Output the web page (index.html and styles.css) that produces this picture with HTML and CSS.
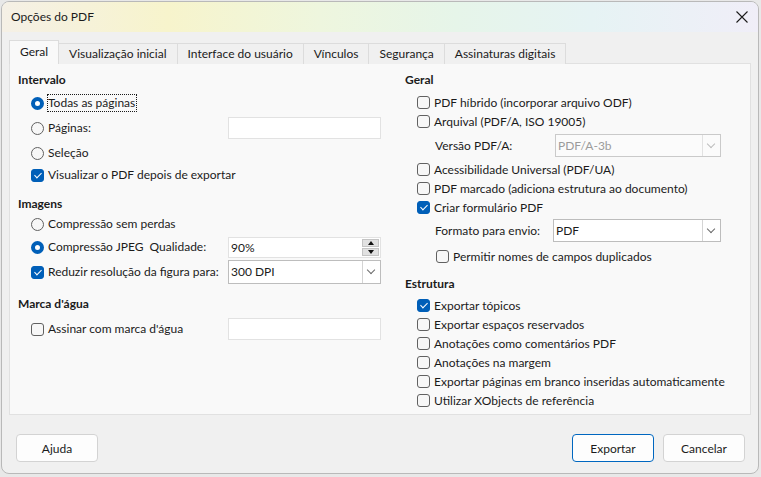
FILE: index.html
```html
<!DOCTYPE html>
<html lang="pt-BR">
<head>
  <meta charset="UTF-8">
  <meta name="viewport" content="width=device-width, initial-scale=1.0">
  <title>Opções do PDF</title>
  <link rel="stylesheet" href="styles.css">
</head>
<body>
  <div class="window">
    <div class="titlebar">
      <span class="title">Opções do PDF</span>
      <svg class="close" width="12" height="12" viewBox="0 0 12 12">
        <path d="M0.5 0.5 L11.5 11.5 M11.5 0.5 L0.5 11.5" stroke="#1b1b1b" stroke-width="1.1" fill="none"/>
      </svg>
    </div>

    <div class="tabs">
      <div class="tab active">Geral</div>
      <div class="tab">Visualização inicial</div>
      <div class="tab">Interface do usuário</div>
      <div class="tab">Vínculos</div>
      <div class="tab">Segurança</div>
      <div class="tab">Assinaturas digitais</div>
    </div>

    <div class="panel">
      <div class="col left">
        <div class="heading">Intervalo</div>
        <div class="row mt4"><span class="radio on"></span><span class="label focus">Todas as páginas</span></div>
        <div class="row field"><span class="radio"></span><span class="label">Páginas:</span><span class="input control"></span></div>
        <div class="row"><span class="radio"></span><span class="label">Seleção</span></div>
        <div class="row mt0"><span class="box on"></span><span class="label">Visualizar o PDF depois de exportar</span></div>

        <div class="heading mt10">Imagens</div>
        <div class="row mt1"><span class="radio"></span><span class="label">Compressão sem perdas</span></div>
        <div class="row field mt1">
          <span class="radio on"></span><span class="label">Compressão JPEG&nbsp; Qualidade:</span>
          <span class="spin control">
            <span class="spin-value">90%</span>
            <span class="spin-buttons">
              <span class="spin-btn"><span class="tri up"></span></span>
              <span class="spin-btn"><span class="tri down"></span></span>
            </span>
          </span>
        </div>
        <div class="row field">
          <span class="box on"></span><span class="label">Reduzir resolução da figura para:</span>
          <span class="select control tall"><span class="select-value">300 DPI</span><span class="arrow"></span></span>
        </div>

        <div class="heading mt13">Marca d'água</div>
        <div class="row field mt6"><span class="box"></span><span class="label">Assinar com marca d'água</span><span class="input control"></span></div>
      </div>

      <div class="col right">
        <div class="heading">Geral</div>
        <div class="item mt5"><span class="box"></span><span class="label">PDF híbrido (incorporar arquivo ODF)</span></div>
        <div class="item"><span class="box"></span><span class="label">Arquival (PDF/A, ISO 19005)</span></div>
        <div class="sub-field mt3">
          <span class="field-label">Versão PDF/A:</span>
          <span class="select disabled"><span class="select-value">PDF/A-3b</span><span class="arrow"></span></span>
        </div>
        <div class="item mt3"><span class="box"></span><span class="label">Acessibilidade Universal (PDF/UA)</span></div>
        <div class="item"><span class="box"></span><span class="label">PDF marcado (adiciona estrutura ao documento)</span></div>
        <div class="item"><span class="box on"></span><span class="label">Criar formulário PDF</span></div>
        <div class="sub-field mt2">
          <span class="field-label">Formato para envio:</span>
          <span class="select wide"><span class="select-value">PDF</span><span class="arrow"></span></span>
        </div>
        <div class="item nested mt5"><span class="box"></span><span class="label">Permitir nomes de campos duplicados</span></div>

        <div class="heading mt10">Estrutura</div>
        <div class="item mt4"><span class="box on"></span><span class="label">Exportar tópicos</span></div>
        <div class="item"><span class="box"></span><span class="label">Exportar espaços reservados</span></div>
        <div class="item"><span class="box"></span><span class="label">Anotações como comentários PDF</span></div>
        <div class="item"><span class="box"></span><span class="label">Anotações na margem</span></div>
        <div class="item"><span class="box"></span><span class="label">Exportar páginas em branco inseridas automaticamente</span></div>
        <div class="item"><span class="box"></span><span class="label">Utilizar XObjects de referência</span></div>
      </div>
    </div>

    <div class="footer">
      <button class="button help">Ajuda</button>
      <button class="button primary">Exportar</button>
      <button class="button">Cancelar</button>
    </div>
  </div>
</body>
</html>
```

FILE: styles.css
```css
* {
  box-sizing: border-box;
}
body {
  margin: 0;
  background: #e8e8e8;
  font-family: Lato, "Noto Sans", sans-serif;
  font-size: 12px;
  color: #1b1b1b;
}
.window {
  margin: 1px 0 0 1px;
  width: 758px;
  height: 473px;
  border: 1px solid #b9b9b9;
  border-radius: 8px;
  background: #f0f0f0;
  overflow: hidden;
}
.titlebar {
  height: 30px;
  display: flex;
  align-items: center;
  justify-content: space-between;
  padding: 0 10px 0 9px;
  background: linear-gradient(90deg, #f5f0e6 0%, #f7f4cc 22%, #eef6de 42%, #e6f5e9 60%, #e6f3f4 78%, #f0eef8 100%);
}
.title {
  line-height: 16px;
}

/* tabs */
.tabs {
  display: flex;
  align-items: flex-end;
  height: 24px;
  margin: 8px 0 -1px 8px;
  position: relative;
  z-index: 1;
}
.tab {
  height: 21px;
  line-height: 19px;
  padding: 0 10px;
  margin-left: -1px;
  border: 1px solid #dcdcdc;
  border-bottom: none;
  background: #f0f0f0;
  white-space: nowrap;
}
.tab.active {
  height: 24px;
  line-height: 22px;
  background: #f9f9f9;
}

/* panel */
.panel {
  margin: 0 7px;
  height: 352px;
  border: 1px solid #e1e1e1;
  background: #f9f9f9;
  display: grid;
  grid-template-columns: 363px 1fr;
  column-gap: 24px;
  padding: 8px 8px 0 8px;
}
.heading {
  font-weight: bold;
  height: 16px;
  line-height: 16px;
}
.label {
  margin-left: 4px;
  line-height: 16px;
  white-space: nowrap;
}
.label.focus {
  outline: 1px dotted #1b1b1b;
  outline-offset: 0;
  padding-right: 1px;
}
.row {
  display: flex;
  align-items: center;
  height: 22px;
  padding-left: 13px;
  margin-top: 3px;
}
.control {
  margin-left: auto;
  width: 153px;
}
.item {
  display: flex;
  align-items: center;
  height: 19px;
  padding-left: 12px;
}
.item.nested {
  padding-left: 31px;
}
.sub-field {
  display: flex;
  align-items: center;
  height: 23px;
  padding-left: 30px;
}
.field-label {
  width: 120px;
  line-height: 16px;
}

.mt0 { margin-top: 0; }
.mt1 { margin-top: 1px; }
.mt2 { margin-top: 2px; }
.mt3 { margin-top: 3px; }
.mt4 { margin-top: 4px; }
.mt5 { margin-top: 5px; }
.mt6 { margin-top: 6px; }
.mt10 { margin-top: 10px; }
.mt13 { margin-top: 13px; }

/* radio and checkbox */
.radio,
.box {
  flex: none;
  width: 13px;
  height: 13px;
  border: 1px solid #616161;
  background: #f7f7f7;
  position: relative;
}
.radio {
  border-radius: 50%;
}
.radio.on {
  border: 4px solid #005fb8;
  background: #fff;
}
.box {
  border-radius: 3px;
}
.box.on {
  border-color: #005fb8;
  background: #005fb8;
}
.box.on::after {
  content: "";
  position: absolute;
  left: 3.5px;
  top: 1px;
  width: 3px;
  height: 6px;
  border-right: 1.2px solid #fff;
  border-bottom: 1.2px solid #fff;
  transform: rotate(45deg);
}

/* text fields */
.input {
  height: 22px;
  background: #fff;
  border: 1px solid #e2e2e2;
}
.spin {
  height: 21px;
  display: flex;
  background: #fff;
  border: 1px solid #e2e2e2;
}
.spin-value {
  flex: 1;
  padding-left: 2px;
  line-height: 19px;
}
.spin-buttons {
  width: 18px;
  display: flex;
  flex-direction: column;
  padding: 1px 1px 1px 0;
  gap: 1px;
}
.spin-btn {
  flex: 1;
  background: #e1e1e1;
  border: 1px solid #c4c4c4;
  display: flex;
  align-items: center;
  justify-content: center;
}
.tri {
  width: 0;
  height: 0;
  border-left: 3.5px solid transparent;
  border-right: 3.5px solid transparent;
}
.tri.up {
  border-bottom: 4px solid #111;
}
.tri.down {
  border-top: 4px solid #111;
}

/* dropdowns */
.select {
  height: 23px;
  width: 166px;
  display: flex;
  background: #fff;
  border: 1px solid #bdbdbd;
}
.select.tall {
  height: 24px;
  width: 153px;
}
.select.wide {
  width: 168px;
  margin-left: -2px;
}
.select-value {
  flex: 1;
  padding-left: 2px;
  line-height: 21px;
}
.tall .select-value {
  line-height: 22px;
}
.arrow {
  width: 18px;
  border-left: 1px solid #d4d4d4;
  position: relative;
}
.arrow::after {
  content: "";
  position: absolute;
  left: 5px;
  top: 6px;
  width: 5px;
  height: 5px;
  border-right: 1px solid #6a6a6a;
  border-bottom: 1px solid #6a6a6a;
  transform: rotate(45deg);
}
.select.disabled {
  border-color: #cacaca;
  background: #fbfbfb;
  color: #9b9b9b;
}
.disabled .arrow {
  border-left-color: #e2e2e2;
}
.disabled .arrow::after {
  border-color: #bdbdbd;
}

/* footer */
.footer {
  display: flex;
  gap: 9px;
  padding: 19px 13px 0 14px;
}
.button {
  width: 82px;
  height: 28px;
  font-family: inherit;
  font-size: 12px;
  color: #1b1b1b;
  background: #fdfdfd;
  border: 1px solid #d3d3d3;
  border-radius: 4px;
  padding: 0;
}
.button.help {
  margin-right: auto;
}
.button.primary {
  border-color: #0067c0;
}
```
